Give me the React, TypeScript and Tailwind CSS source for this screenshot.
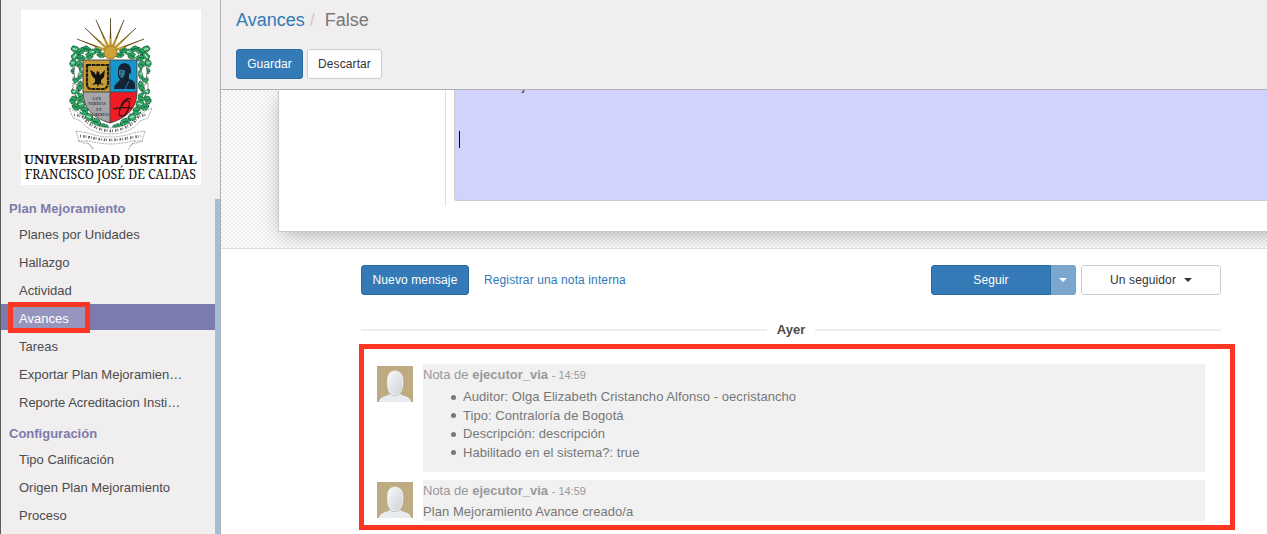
import React from "react";

const leaves = [
  [54, 39, 4, 3, 20], [60, 41, 5, 3, -30], [66, 39, 4, 2.5, 30], [71, 42, 4, 3, 0], [77, 40, 3.5, 3, 40], [80, 45, 4, 2.5, 10],
  [54, 46, 4, 3, -40], [60, 48, 4, 3, 20], [68, 46, 4, 3, 0], [52, 53, 3, 4, 20], [58, 55, 3.5, 4, -20],
  [53, 61, 3, 3, 0], [59, 64, 2.5, 5, 0], [55, 69, 3, 4, 20], [59, 76, 2.5, 5, 10], [54, 81, 4, 3, -20],
  [58, 87, 4, 4, 10], [52, 90, 3, 4, 20], [60, 94, 4, 4, 0], [55, 97, 4, 3, 30], [63, 101, 4, 4, 20], [68, 107, 4, 3.5, 30], [75, 112, 5, 3.5, 25], [83, 117, 5, 3, 15],
];

const rays = [
  [56, 29], [64, 18], [75, 10], [89.5, 8], [103, 10], [115, 18], [123, 29],
];

function Garland() {
  return (
    <g>
      {leaves.map(([x, y, rx, ry, turn], i) => (
        <g key={i} transform={`translate(${x} ${y}) rotate(${turn})`}>
          <ellipse rx={rx} ry={ry} fill="#2fa866" stroke="#1b3d2a" strokeWidth=".7" strokeDasharray="3 1" />
          <path d={`M${-rx * 0.6} .5L${rx * 0.5} -.5`} stroke={i % 3 ? "#126137" : "#dff4e6"} strokeWidth="1" />
        </g>
      ))}
      <path d="M54 55l4 3-1 9-3 2-1-7zM52 73l4 2-1 6-3-2z" fill="#fff" stroke="#555" strokeWidth=".6" />
      <path d="M63 44l2 3m9-1l2 2M57 59l1 4m-3 21l2 3m1 13l3 2" stroke="#fff" strokeWidth="1.2" />
    </g>
  );
}

function Crest() {
  return (
    <svg className="block h-[175px] w-[180px] bg-white" viewBox="0 0 180 175">
      <Garland />
      <g transform="translate(179 0) scale(-1 1)"><Garland /></g>
      {rays.map(([x, y], i) => {
        const dx = 89.5 - x;
        const dy = 42 - y;
        const len = Math.hypot(dx, dy);
        const nx = (-dy / len) * 1.7;
        const ny = (dx / len) * 1.7;
        return (
          <g key={i}>
            <path d={`M${x} ${y}L${89.5 + nx} ${42 + ny}L${89.5 - nx} ${42 - ny}Z`} fill="#c09a35" />
            <path d={`M${x} ${y}L${x + dx * 0.6} ${y + dy * 0.6}`} stroke="#40371f" strokeWidth=".8" />
          </g>
        );
      })}
      <path d="M62 50h54v32q0 23-27 31Q62 105 62 82z" fill="#a5a5aa" />
      <path d="M62 50h27v32H62z" fill="#c59d36" />
      <path d="M89 50h27v32H89z" fill="#1496cf" />
      <path d="M89 82h27q0 23-27 31z" fill="#f21b24" />
      <path d="M62 50h54v32q0 23-27 31Q62 105 62 82zM89 50v63M62 82h54" fill="none" stroke="#4e4b45" strokeWidth="1" />
      <path d="M66 55h21v19q-1 5-5 5H70q-4 0-4-5z" fill="none" stroke="#211c14" strokeWidth="2.2" strokeDasharray="4 .6" />
      <path d="M69 60l4 2 2 3 1-4 2 1 1 3 4-4 1-1-1 7-3 3v3l3 2-5-1-1 3-1-3-5 1 3-3v-3l-3-3z" fill="#17130f" />
      <path d="M97 61q0-7 6-8 6 0 7 6v4l-2 1v5q5 1 6 5v5H93l1-5 5-4-2-4z" fill="#152333" />
      <path d="M98 60q4-1 6 1l-1 5-2 2q-3-1-3-5z" fill="#3286ab" />
      <path d="M99 62h3m-3 3h2m2 7l3-4 1 4m-6 3l2 4" fill="none" stroke="#101725" strokeWidth=".8" />
      <path d="M104 79l4-8m-14 4l3-3" stroke="#1496cf" strokeWidth=".8" />
      <g fill="#38383d" fontFamily="Liberation Serif, serif" fontSize="4" fontWeight="bold" textAnchor="middle">
        <text x="76" y="90">LUX</text>
        <text x="76" y="95">VERITAS</text>
        <text x="78" y="100.5">ET</text>
        <text x="79.5" y="106" textLength="17" lengthAdjust="spacingAndGlyphs">LIBERTAS</text>
      </g>
      <path d="M92 99q9-2 19-1M110 89q-5-2-9 5-5 11-1 12 4 1 7-6 3-8 0-9-4-1-6 5" fill="none" stroke="#211315" strokeWidth="1.2" />
      <g fill="#fff" stroke="#777" strokeWidth=".6" strokeDasharray="2 .7">
        <path d="M48 98l4 10 8 3q8 12 29.500 13 21.500-1 29.500-13l8-3 4-10-8 4-5 3q-9 12-28.500 13-19.500-1-28.500-13l-5-3z" />
        <path d="M55 121l12 2q22 8 45 0l12-2-3 10-11 0q-20 6-41 0l-11 0z" />
        <path d="M57 131q5 2 11 3l4 6M122 131q-5 2-11 3l-4 6M65 131l8 8M114 131l-6 6" fill="none" />
      </g>
      <path d="M53 105q9 0 12 6 10 9 24.500 10 15-1 24.500-10 3-6 12-6M59 126q10 1 13 2 17 4 35 0l13-2" fill="none" stroke="#606366" strokeWidth="2.600" strokeDasharray=".8 2 1.500 1" />
      <circle cx="89.5" cy="42.5" r="6.500" fill="#cba33a" stroke="#a37d20" />
      <g fill="#111" fontFamily="Noto Serif, DejaVu Serif, serif">
        <text x="3" y="153.700" fontSize="13.300" fontWeight="bold" textLength="173" lengthAdjust="spacingAndGlyphs">UNIVERSIDAD DISTRITAL</text>
        <text x="4" y="168.700" fontSize="13.800" textLength="171" lengthAdjust="spacingAndGlyphs">FRANCISCO JOSÉ DE CALDAS</text>
      </g>
    </svg>
  );
}

function Avatar() {
  return (
    <svg className="block size-9 shrink-0" viewBox="0 0 36 36">
      <defs>
        <linearGradient id="skin" x1="0" y1="0" x2="1" y2="1"><stop offset="0" stopColor="#fafbfc" /><stop offset="1" stopColor="#cbd0d5" /></linearGradient>
      </defs>
      <path d="M0 0h36v36H0z" fill="#bfab82" />
      <path d="M2 36q0-4 6-6 5-1 6-4h8q1 3 6 4 6 2 6 6z" fill="#e9ecef" />
      <path d="M12 26q1 4 6 4t6-4" fill="#b3bcc6" />
      <path d="M10.500 15Q10.500 5 18 5t8 10q0 14-8 14t-7.500-14z" fill="url(#skin)" stroke="#f3f5f6" strokeWidth=".8" />
    </svg>
  );
}

function Caret({ className = "" }: { className?: string }) {
  return <span className={`inline-block border-x-4 border-t-4 border-x-transparent ${className}`} />;
}

function MenuItem({ children, active = false }: { children: string; active?: boolean }) {
  return (
    <a className={`relative mb-0.5 flex h-[26px] items-center pt-1 pl-[18px] ${active ? "bg-[#7c7bad] text-white" : "text-[#4c4c4c]"}`}>
      {active && <span className="absolute -top-0.5 left-[7px] h-[31px] w-[82px] border-[5px] border-[#fd3621] bg-white/20" />}
      <span className="relative whitespace-nowrap">{children}</span>
    </a>
  );
}

function Note({ children, className = "" }: { children: React.ReactNode; className?: string }) {
  return (
    <article className="flex gap-2.5">
      <div className="pt-0.5"><Avatar /></div>
      <div className={`w-[782px] bg-[#f1f1f1] text-[#777] ${className}`}>
        <p className="h-[22px] leading-[22px] text-[#999]">Nota de <b>ejecutor_via</b> <span className="text-[11px]">- 14:59</span></p>
        {children}
      </div>
    </article>
  );
}

function Bullet({ children }: { children: string }) {
  return (
    <li className="flex items-center gap-[7px]">
      <span className="size-[5px] rounded-full bg-[#777]" />
      {children}
    </li>
  );
}

export default function App() {
  return (
    <div className="flex h-[534px] w-[1267px] overflow-hidden bg-white font-['Liberation_Sans',Arial,sans-serif] text-[13px] text-[#4c4c4c]">
      <aside className="relative flex h-full w-[221px] shrink-0 flex-col border-r border-l border-r-[#afafb6] border-l-[#5b5a5c] bg-[#f0eeee]">
        <div className="h-[195px] shrink-0 pt-2.5 pl-5"><Crest /></div>
        <nav className="mr-[5px]">
          <h2 className="flex h-[25px] items-center pt-0.5 pl-2 font-bold tracking-[0.06px] text-[#7c7bad]">Plan Mejoramiento</h2>
          <MenuItem>Planes por Unidades</MenuItem>
          <MenuItem>Hallazgo</MenuItem>
          <MenuItem>Actividad</MenuItem>
          <MenuItem active>Avances</MenuItem>
          <MenuItem>Tareas</MenuItem>
          <MenuItem>Exportar Plan Mejoramien…</MenuItem>
          <MenuItem>Reporte Acreditacion Insti…</MenuItem>
          <h2 className="flex h-[29px] items-center pt-1.5 pl-2 font-bold text-[#7c7bad]">Configuración</h2>
          <MenuItem>Tipo Calificación</MenuItem>
          <MenuItem>Origen Plan Mejoramiento</MenuItem>
          <MenuItem>Proceso</MenuItem>
        </nav>
        <div className="absolute top-[199px] right-0 bottom-0 w-[5px] bg-[#a1bfd6]" />
      </aside>
      <main className="flex min-w-0 flex-1 flex-col">
        <header className="h-[90px] shrink-0 border-b border-[#afafb6] bg-[#f0eeee] pl-[15px]">
          <div className="flex h-[49px] items-start pt-[9px] text-lg leading-[22px]">
            <a className="text-[#337ab7]">Avances</a><span className="ml-[5px] text-[#ccc]">/</span><span className="ml-2.5 text-[#777]">False</span>
          </div>
          <div className="flex gap-1 text-xs tracking-[0.1px]">
            <button className="h-[30px] w-[67px] rounded-[3px] border border-[#2e6da4] bg-[#337ab7] text-white">Guardar</button>
            <button className="h-[30px] w-[75px] rounded-[3px] border border-[#ccc] bg-white text-[#333]">Descartar</button>
          </div>
        </header>
        <section className="h-[159px] shrink-0 overflow-hidden border-b border-[#ddd] bg-[conic-gradient(#ececec_25%,white_0_50%,#ececec_0_75%,white_0)] bg-size-[4px_4px] pl-[57px]">
          <div className="flex h-[142px] w-[1020px] border-b border-l border-[#c8c8d3] bg-white shadow-[0_5px_20px_-4px_rgba(0,0,0,0.32)]">
            <div className="h-[116px] w-[167px] border-r border-[#ddd]" />
            <div className="relative ml-2 h-[111px] flex-1 overflow-hidden rounded-b-[3px] border-b border-l border-[#ccc] bg-[#d2d2ff] pt-[41px] pl-1">
              <span className="absolute -top-[14px] left-[67px] text-[#333]">j</span>
              <div className="h-[17px] w-px bg-black" />
            </div>
          </div>
        </section>
        <section className="w-[1000px] pt-4 pl-[140px]">
          <div className="flex w-[860px] text-xs tracking-[0.12px]">
            <button className="h-[30px] w-[108px] rounded-[3px] border border-[#2e6da4] bg-[#337ab7] text-white">Nuevo mensaje</button>
            <a className="ml-[15px] leading-[30px] text-[#337ab7]">Registrar una nota interna</a>
            <div className="ml-auto flex">
              <button className="h-[30px] w-[120px] rounded-l-[3px] border border-[#2e6da4] bg-[#337ab7] text-white">Seguir</button>
              <button className="mr-[5px] flex h-[30px] w-[25px] items-center justify-center rounded-r-[3px] border border-l-0 border-[#76a3ca] bg-[#7ba7cf]"><Caret className="border-t-white" /></button>
              <button className="flex h-[30px] w-[140px] items-center justify-center gap-2 rounded-[3px] border border-[#ccc] bg-white text-[#333]">Un seguidor <Caret className="border-t-[#333]" /></button>
            </div>
          </div>
          <div className="mt-[25px] flex h-[19px] w-[860px] items-center gap-2.5 font-bold text-[#4c4c4c]">
            <span className="h-0.5 flex-1 bg-[#eee]" />Ayer<span className="h-0.5 flex-1 bg-[#eee]" />
          </div>
          <div className="mt-[5px] -ml-0.5 flex h-[186px] w-[876px] flex-col gap-2 border-[5px] border-[#fd3621] pt-[15px] pl-[13px]">
            <Note className="h-[108px]">
              <ul className="pt-0.5 pl-7 leading-[18.57px] tracking-[0.05px]">
                <Bullet>Auditor: Olga Elizabeth Cristancho Alfonso - oecristancho</Bullet>
                <Bullet>Tipo: Contraloría de Bogotá</Bullet>
                <Bullet>Descripción: descripción</Bullet>
                <Bullet>Habilitado en el sistema?: true</Bullet>
              </ul>
            </Note>
            <Note className="h-[41px]"><p className="leading-[19px] tracking-[0.05px]">Plan Mejoramiento Avance creado/a</p></Note>
          </div>
        </section>
      </main>
    </div>
  );
}
